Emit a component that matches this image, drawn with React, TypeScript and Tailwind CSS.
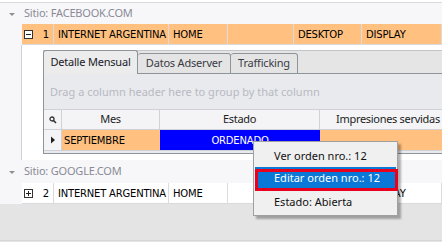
import React from 'react';

const grid = '"DejaVu Sans", Verdana, sans-serif';
const ui = '"Noto Sans", "Open Sans", sans-serif';

function ExpandBox({ open }: { open: boolean }) {
  return (
    <span className="relative inline-block h-[9px] w-[9px] border border-[#333] bg-white">
      <span className="absolute left-[1px] top-[3px] h-px w-[5px] bg-[#222]" />
      {!open && <span className="absolute left-[3px] top-[1px] h-[5px] w-px bg-[#222]" />}
    </span>
  );
}

function GroupRow({ label, h }: { label: string; h: string }) {
  return (
    <div className={`flex items-center bg-[#f7f7f9] ${h}`}>
      <svg width="22" height="10" viewBox="0 0 22 10" className="shrink-0">
        <path d="M9 4 L15 4 L12 7 Z" fill="#8e8e98" />
      </svg>
      <span className="pl-[2px] text-[11px] text-[#8a8a96]" style={{ fontFamily: ui }}>
        {label}
      </span>
    </div>
  );
}

function DataRow({ n, open, bg }: { n: number; open: boolean; bg: string }) {
  const cells = [
    { w: 'w-[115px]', t: 'INTERNET ARGENTINA' },
    { w: 'w-[59px]', t: 'HOME' },
    { w: 'w-[66px]', t: '' },
    { w: 'w-[68px]', t: 'DESKTOP' },
    { w: 'flex-1', t: 'DISPLAY' },
  ];
  return (
    <div className="flex h-[21px] bg-[#f7f7f9]">
      <div className="w-[22px] shrink-0" />
      <div className={`flex flex-1 border-b border-[#d9d9de] ${bg}`}>
        <div className="flex w-[32px] shrink-0 items-center justify-between border-r border-[#d9d9de] pl-[2px] pr-[4px]">
          <ExpandBox open={open} />
          <span>{n}</span>
        </div>
        {cells.map((c, i) => (
          <div key={i} className={`flex shrink-0 items-center overflow-hidden border-r border-[#dcdce0] pl-[4px] ${c.w}`}>
            {c.t}
          </div>
        ))}
      </div>
    </div>
  );
}

export default function App() {
  return (
    <div
      className="relative h-[242px] w-[442px] overflow-hidden whitespace-nowrap bg-[#e4e4e4] text-[10px] tracking-[-0.2px] text-black"
      style={{ fontFamily: grid }}
    >
      <div className="bg-white pt-[2px]">
        <div className="border-t border-[#dadade]">
          <GroupRow label="Sitio: FACEBOOK.COM" h="h-[21px]" />
          <DataRow n={1} open bg="bg-[#ffc080]" />

          {/* detail */}
          <div className="flex h-[115px]">
            <div className="w-[22px] shrink-0 border-r border-[#d0d0d6] bg-[#f7f7f9]" />
            <div className="w-[21px] shrink-0 bg-white" />
            <div className="flex min-w-0 flex-1 flex-col bg-white pt-[5px]">
              {/* tab strip */}
              <div className="flex h-[24px] items-end border-t border-[#c2c4c8] bg-[#e5e5e5] text-[11px] tracking-[-0.2px]" style={{ fontFamily: ui }}>
                <div className="flex h-[24px] w-[95px] shrink-0 items-center justify-center rounded-t-[3px] border border-b-0 border-[#8d949a] bg-[#ececec] text-[#1a1a2a]">
                  Detalle Mensual
                </div>
                <div className="flex h-[21px] w-[93px] shrink-0 items-center justify-center rounded-t-[3px] border border-l-0 border-[#8d949a] bg-[#e4e4e4] text-[#3a3a44]">
                  Datos Adserver
                </div>
                <div className="flex h-[21px] w-[67px] shrink-0 items-center justify-center rounded-t-[3px] border border-l-0 border-[#8d949a] bg-[#e4e4e4] text-[#3a3a44]">
                  Trafficking
                </div>
                <div className="h-px flex-1 self-end bg-[#8d949a]" />
              </div>
              {/* panel */}
              <div className="flex flex-1 flex-col border-b border-l border-[#8d949a] bg-[#e9eaee]">
                <div className="flex h-[35px] items-center pl-[6px] pt-[2px] text-[11px] tracking-normal text-[#b8b9c2]" style={{ fontFamily: ui }}>
                  Drag a column header here to group by that column
                </div>
                <div className="flex h-[21px] border-y border-[#d0d1d6] bg-[#f4f4f6] text-[11px] tracking-[-0.3px] text-[#222]" style={{ fontFamily: ui }}>
                  <div className="flex w-[18px] shrink-0 items-center justify-center border-r border-[#d0d1d6]">
                    <svg width="8" height="8" viewBox="0 0 8 8">
                      <circle cx="3" cy="3" r="2" fill="none" stroke="#333" strokeWidth="1.3" />
                      <path d="M4.5 4.5 L7 7" stroke="#333" strokeWidth="1.6" />
                    </svg>
                  </div>
                  <div className="flex w-[98px] shrink-0 items-center justify-center border-r border-[#d0d1d6]">Mes</div>
                  <div className="flex w-[160px] shrink-0 items-center justify-center border-r border-[#d0d1d6]">Estado</div>
                  <div className="flex flex-1 items-center pl-[16px]">Impresiones servidas</div>
                </div>
                <div className="flex h-[21px] border-b border-[#d0d1d6]">
                  <div className="flex w-[18px] shrink-0 items-center justify-center border-r border-[#d0d1d6] bg-[#f4f4f6]">
                    <svg width="6" height="8" viewBox="0 0 6 8">
                      <path d="M1 0.5 L5 4 L1 7.5 Z" fill="#222" />
                    </svg>
                  </div>
                  <div className="flex w-[98px] shrink-0 items-center bg-[#ffc080] pl-[2px]">SEPTIEMBRE</div>
                  <div className="flex w-[160px] shrink-0 items-center justify-center bg-[#0000ff] text-white">ORDENADO</div>
                  <div className="flex-1 bg-[#ffc080]" />
                </div>
                <div className="flex-1" />
              </div>
              <div className="h-[6px] bg-white" />
            </div>
          </div>

          <GroupRow label="Sitio: GOOGLE.COM" h="h-[23px]" />
          <DataRow n={2} open={false} bg="bg-white" />
        </div>
      </div>
      <div className="absolute bottom-[1px] left-0 h-px w-full bg-[#d6d6d6]" />

      {/* context menu */}
      <div
        className="absolute left-[253px] top-[141px] flex w-[145px] flex-col border border-[#a0a0a0] bg-[#f0f0f0] py-[3px] text-[11px] tracking-normal text-[#111] shadow-[3px_3px_2px_rgba(0,0,0,0.3)]"
        style={{ fontFamily: ui }}
      >
        <div className="flex h-[22px] items-center pl-[20px]">Ver orden nro.: 12</div>
        <div className="relative mx-[1px] flex h-[23px] items-center bg-[#0a78d7] pl-[19px] text-white">
          Editar orden nro.: 12
          <div className="absolute -right-[2px] left-0 top-[2px] h-[22px] border-[3px] border-[#e8001c]" />
        </div>
        <div className="flex h-[22px] items-center pl-[20px] pt-[2px]">Estado: Abierta</div>
      </div>
    </div>
  );
}
